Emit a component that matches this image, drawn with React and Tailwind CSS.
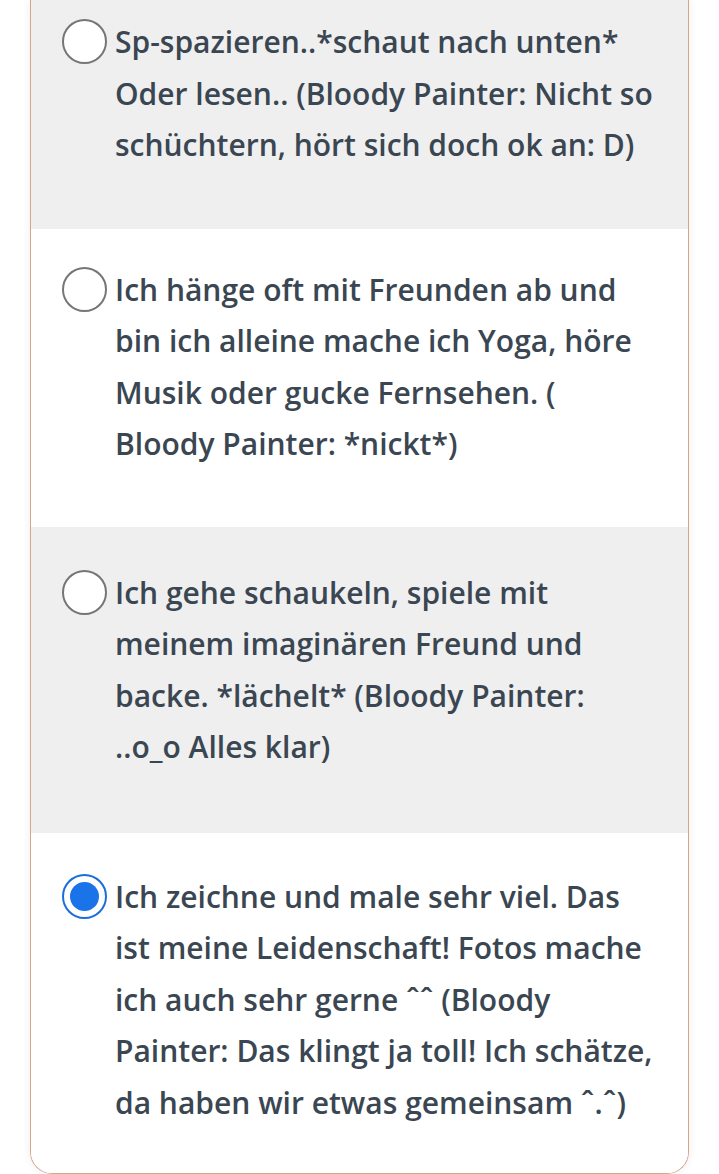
const options = [
  {
    lines: ["Sp-spazieren..*schaut nach unten*", "Oder lesen.. (Bloody Painter: Nicht so", "schüchtern, hört sich doch ok an: D)"],
    bg: "bg-[#efefef]",
    pad: "pt-[16px] pb-[58px]",
  },
  {
    lines: ["Ich hänge oft mit Freunden ab und", "bin ich alleine mache ich Yoga, höre", "Musik oder gucke Fernsehen. (", "Bloody Painter: *nickt*)"],
    bg: "bg-white",
    pad: "pt-[35px] pb-[57px]",
  },
  {
    lines: ["Ich gehe schaukeln, spiele mit", "meinem imaginären Freund und", "backe. *lächelt* (Bloody Painter:", "..o_o Alles klar)"],
    bg: "bg-[#efefef]",
    pad: "pt-[40px] pb-[60px]",
  },
  {
    lines: ["Ich zeichne und male sehr viel. Das", "ist meine Leidenschaft! Fotos mache", "ich auch sehr gerne ˆˆ (Bloody", "Painter: Das klingt ja toll! Ich schätze,", "da haben wir etwas gemeinsam ˆ.ˆ)"],
    bg: "bg-white",
    pad: "pt-[38px] pb-[45px]",
    checked: true,
  },
];

function Radio({ checked }) {
  if (checked) {
    return (
      <span className="mt-[3px] flex h-[45px] w-[45px] shrink-0 items-center justify-center rounded-full border-2 border-[#1a6fd8] bg-white">
        <span className="h-[29px] w-[29px] rounded-full bg-[#1a73e8]" />
      </span>
    );
  }
  return <span className="mt-[3px] h-[45px] w-[45px] shrink-0 rounded-full border-2 border-[#767676] bg-white" />;
}

export default function App() {
  return (
    <div className="min-h-[1174px] bg-white px-[30px]" style={{ fontFamily: '"Open Sans", sans-serif' }}>
      <div className="overflow-hidden rounded-b-[22px] border-x border-b border-[#d6a68c] shadow-[0_0_10px_rgba(0,0,0,0.07)]">
        {options.map((o, i) => (
          <label key={i} className={`flex items-start gap-[8px] pl-[31px] pr-[10px] ${o.bg} ${o.pad}`}>
            <Radio checked={o.checked} />
            <span className="text-[30px] font-semibold leading-[51.5px] text-[#3a4651]">
              {o.lines.map((l, j) => (
                <span key={j} className="block whitespace-nowrap">{l}</span>
              ))}
            </span>
          </label>
        ))}
      </div>
    </div>
  );
}
